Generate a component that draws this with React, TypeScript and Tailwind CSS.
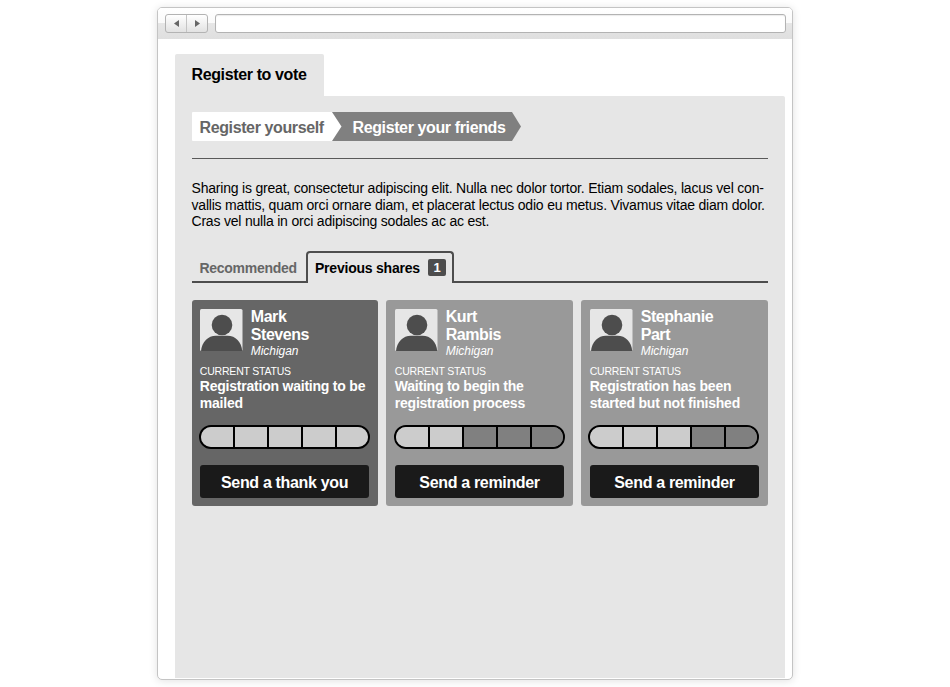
type Friend = {
  first: string;
  last: string;
  status: string[];
  done: number;
  action: string;
  dark?: boolean;
};

const friends: Friend[] = [
  { first: "Mark", last: "Stevens", status: ["Registration waiting to be", "mailed"], done: 5, action: "Send a thank you", dark: true },
  { first: "Kurt", last: "Rambis", status: ["Waiting to begin the", "registration process"], done: 2, action: "Send a reminder" },
  { first: "Stephanie", last: "Part", status: ["Registration has been", "started but not finished"], done: 3, action: "Send a reminder" },
];

const segmentWidths = ["w-[34px]", "w-[34px]", "w-[34px]", "w-[34px]", "w-[31px]"];

function Avatar() {
  return (
    <svg width="43" height="42" viewBox="0 0 43 42" className="block shrink-0">
      <rect width="42.5" height="42" rx="1.5" fill="#e6e6e6" />
      <circle cx="22" cy="16" r="10.3" fill="#4d4d4d" />
      <path d="M1 42C1.800 33 8 26.800 16 26.800h11.500c8 0 14 6.200 14.700 15.200z" fill="#4d4d4d" />
    </svg>
  );
}

function Progress({ done }: { done: number }) {
  return (
    <div className="-ml-[1.23px] mt-[13px] flex h-6 w-[171px] overflow-hidden rounded-full border-2 border-black">
      {segmentWidths.map((width, i) => (
        <div
          key={i}
          className={`${width} shrink-0 ${i < done ? "bg-[#cccccc]" : "bg-[#808080]"} ${i < 4 ? "border-r-2 border-black" : ""}`}
        />
      ))}
    </div>
  );
}

function Card({ friend }: { friend: Friend }) {
  return (
    <article className={`h-[206px] w-[186.6px] rounded-[3px] pl-[8.3px] pt-[9px] text-white ${friend.dark ? "bg-[#666666]" : "bg-[#999999]"}`}>
      <div className="flex h-[56px] gap-2">
        <Avatar />
        <div className="-mt-px text-[16px] font-bold leading-[18px] tracking-[-0.45px]">
          <div>{friend.first}</div>
          <div>{friend.last}</div>
          <div className="text-[12px] font-normal italic leading-[15px] tracking-[-0.05px]">Michigan</div>
        </div>
      </div>
      <div className="text-[10.5px] leading-[13px] tracking-[-0.2px]">CURRENT STATUS</div>
      <div className="whitespace-nowrap text-[14px] font-bold leading-[17px] tracking-[-0.22px]">
        {friend.status.map((line) => (
          <div key={line}>{line}</div>
        ))}
      </div>
      <Progress done={friend.done} />
      <button className="mt-4 flex h-[33px] w-[169.6px] justify-center rounded-[3px] bg-[#1a1a1a] pt-px text-[16px] font-bold leading-[34px] tracking-[-0.33px]">
        {friend.action}
      </button>
    </article>
  );
}

export default function App() {
  return (
    <div className="h-[687px] w-[950px] overflow-hidden bg-white pl-[157px] pt-[7px] font-['Liberation_Sans',Arial,sans-serif] text-black">
      <main className="h-[673px] w-[636px] overflow-hidden rounded-[5px] border border-[#c4c4c4] bg-white shadow-[0_1px_8px_rgba(0,0,0,0.12)]">
        <header className="flex h-[31px] bg-[linear-gradient(#ffffff_0px,#fafafa_15px,#e6e6e6_15px,#dfdfdf_31px)] pl-[7px] pt-[6px]">
          <div className="flex h-[19px] w-[43px] rounded-[3px] border border-[#b3b3b3] bg-gradient-to-b from-white to-[#e2e2e2]">
            <div className="flex w-[21px] items-center justify-center border-r border-[#c4c4c4]">
              <svg width="5" height="7" viewBox="0 0 5 7"><path d="M5 0v7L0 3.5z" fill="#666" /></svg>
            </div>
            <div className="flex flex-1 items-center justify-center">
              <svg width="5" height="7" viewBox="0 0 5 7"><path d="M0 0v7l5-3.5z" fill="#666" /></svg>
            </div>
          </div>
          <div className="ml-[7px] h-[19px] w-[571px] rounded-[3px] border border-[#b3b3b3] bg-white shadow-[inset_0_1px_1px_rgba(0,0,0,0.08)]" />
        </header>

        <div className="ml-[17px] mt-[15px] w-[610px]">
          <h1 className="h-[42px] w-[149px] rounded-t-[2px] bg-[#e6e6e6] pl-[16.5px] text-[16px] font-bold leading-[42px] tracking-[-0.37px]">Register to vote</h1>
          <section className="h-[582px] rounded-tr-[2px] bg-[#e6e6e6] pl-[16.5px] pt-[16px]">
            <nav className="flex h-[29px] text-[16px] font-bold leading-[31px] tracking-[-0.38px]">
              <div className="z-10 w-[150px] whitespace-nowrap rounded-l-[1px] bg-white pl-[8px] text-[#666666] [clip-path:polygon(0_0,140.5px_0,150px_50%,140.5px_100%,0_100%)]">
                Register yourself
              </div>
              <div className="-ml-[9.5px] w-[189px] whitespace-nowrap bg-[#808080] pl-[20.5px] text-white [clip-path:polygon(0_0,180px_0,100%_50%,180px_100%,0_100%)]">
                Register your friends
              </div>
            </nav>
            <hr className="mt-[17px] w-[576.5px] border-t border-[#595959]" />
            <p className="mt-[21px] whitespace-nowrap text-[14px] leading-[16.7px] tracking-[-0.2px]">
              <span className="block">Sharing is great, consectetur adipiscing elit. Nulla nec dolor tortor. Etiam sodales, lacus vel con-</span>
              <span className="block">vallis mattis, quam orci ornare diam, et placerat lectus odio eu metus. Vivamus vitae diam dolor.</span>
              <span className="block">Cras vel nulla in orci adipiscing sodales ac ac est.</span>
            </p>
            <div className="mt-[21px] flex h-[32px] w-[576.5px] text-[14px] font-bold leading-[34px]">
              <div className="w-[114.5px] border-b-2 border-[#4d4d4d] pl-[8px] tracking-[-0.28px] text-[#666666]">Recommended</div>
              <div className="flex w-[148px] rounded-t-[4px] border-2 border-b-0 border-[#4d4d4d] pl-[7px] leading-[30px] tracking-[-0.22px]">
                <span className="w-[113px] whitespace-nowrap">Previous shares</span>
                <span className="mt-[6px] h-[17px] w-[18px] rounded-[2px] bg-[#4d4d4d] text-center text-[13px] leading-[17px] text-white">1</span>
              </div>
              <div className="flex-1 border-b-2 border-[#4d4d4d]" />
            </div>
            <div className="mt-[17px] flex w-[576.5px] justify-between">
              {friends.map((f) => (
                <Card key={f.first} friend={f} />
              ))}
            </div>
          </section>
        </div>
      </main>
    </div>
  );
}
